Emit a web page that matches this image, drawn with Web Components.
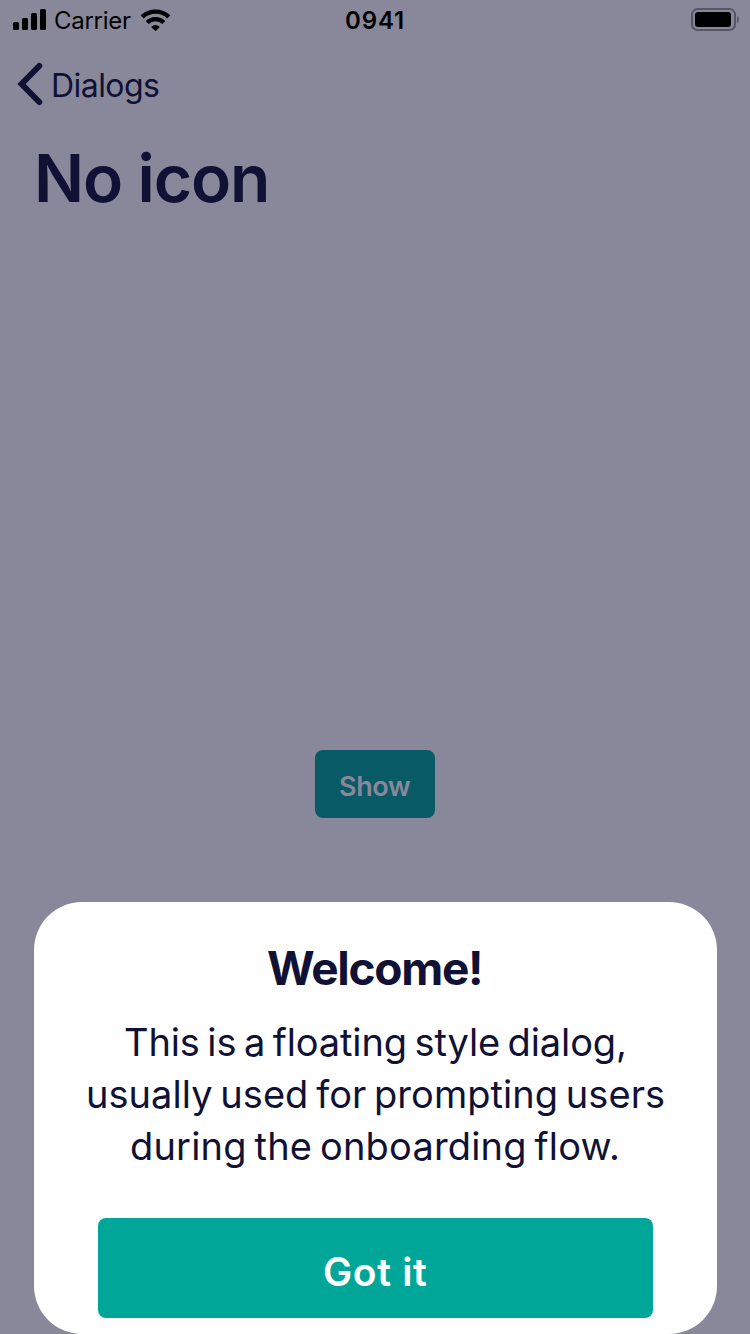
<!DOCTYPE html>
<html lang="en">
<head>
<meta charset="utf-8">
<title>No icon</title>
<style>
html,body{margin:0;height:100%}
body{font-family:Inter,"Liberation Sans",sans-serif;color:#111135;overflow:hidden}
</style>
</head>
<body>
<dialog-screen></dialog-screen>
<script>
// A single line of text whose drawn glyphs span exactly `span` pixels.
class TextLine extends HTMLElement {
  connectedCallback() {
    const root = this.attachShadow({mode: 'open'});
    root.innerHTML = `<style>:host{display:block;white-space:pre;flex:none;font-kerning:normal}
      span{display:inline-block}</style><span><slot></slot></span>`;
    const text = this.textContent, span = +this.getAttribute('span');
    const size = +this.getAttribute('size'), weight = this.getAttribute('weight') || 400;
    const ctx = document.createElement('canvas').getContext('2d');
    ctx.font = `${weight} ${size}px Inter, "Liberation Sans", sans-serif`;
    const m = ctx.measureText(text);
    const gap = +(this.getAttribute('gap') || 0);
    const ink = m.actualBoundingBoxLeft + m.actualBoundingBoxRight + gap * (text.split(' ').length - 1);
    this.style.font = ctx.font;
    this.style.lineHeight = (this.getAttribute('line') || size) + 'px';
    this.style.width = span + 'px';
    this.style.marginLeft = (this.getAttribute('indent') || 0) + 'px';
    const label = root.querySelector('span');
    label.style.letterSpacing = (span - ink) / (text.length - 1) + 'px';
    label.style.wordSpacing = gap + 'px';
    label.style.marginLeft = m.actualBoundingBoxLeft + 'px';
  }
}
customElements.define('text-line', TextLine);

class StatusBar extends HTMLElement {
  constructor() {
    super();
    this.attachShadow({mode: 'open'}).innerHTML = `
    <style>:host{display:grid;grid-template-columns:346px 345px 1fr;height:40px;color:#000}
    .left{display:flex}svg{display:block;flex:none}</style>
    <div class="left">
      <svg width="55" height="40"><rect x="13" y="22" width="6" height="8" rx="1.5"/><rect x="22" y="18" width="6" height="12" rx="1.5"/><rect x="31" y="13" width="6" height="17" rx="1.5"/><rect x="40" y="9" width="6" height="21" rx="1.5"/></svg>
      <text-line size="24" line="42" span="76">Carrier</text-line>
      <svg width="50" height="40" fill="none" stroke="#000"><path d="M11.2 16.9A19.5 19.5 0 0 1 37.8 16.9" stroke-width="4.4"/><path d="M16.2 22.6A11.7 11.7 0 0 1 32.8 22.6" stroke-width="4.2"/><path d="M20.2 26.9Q24.5 23 28.8 26.9L24.5 31.2Z" fill="#000" stroke="none"/></svg>
    </div>
    <text-line size="24" line="42" weight="600" span="57">0941</text-line>
    <svg width="59" height="40"><rect x="1" y="9" width="43" height="21" rx="5.5" fill="none" stroke="#575665" stroke-width="2"/><rect x="4" y="12" width="36" height="15" rx="3"/><path d="M46 16Q48 17 48 19.5T46 23Z" fill="#575665"/></svg>`;
  }
}
customElements.define('status-bar', StatusBar);

class NavBar extends HTMLElement {
  constructor() {
    super();
    this.attachShadow({mode: 'open'}).innerHTML = `
    <style>:host{display:flex;height:88px}svg{display:block;flex:none}</style>
    <svg width="52" height="88" fill="none" stroke="#111135" stroke-width="6" stroke-linecap="round" stroke-linejoin="miter"><path d="M39.2 26L21.6 44L39.2 62"/></svg>
    <slot></slot>`;
  }
}
customElements.define('nav-bar', NavBar);

class AppButton extends HTMLElement {
  constructor() {
    super();
    this.attachShadow({mode: 'open'}).innerHTML = `
    <style>:host{display:block;box-sizing:border-box;border-radius:8px;background:var(--fill);color:var(--ink)}</style><slot></slot>`;
  }
}
customElements.define('app-button', AppButton);

class FloatingDialog extends HTMLElement {
  constructor() {
    super();
    this.attachShadow({mode: 'open'}).innerHTML = `
    <style>:host{display:flex;flex-direction:column;box-sizing:border-box;width:683px;height:432px;margin-left:34px;padding-top:40px;border-radius:48px;background:#fff}
    .body{margin-top:22px;height:156px}
    ::slotted(app-button){width:555px;height:100px;margin:46px 0 0 64px}</style>
    <slot name="title"></slot><div class="body"><slot></slot></div><slot name="action"></slot>`;
  }
}
customElements.define('floating-dialog', FloatingDialog);

class DialogScreen extends HTMLElement {
  constructor() {
    super();
    this.attachShadow({mode: 'open'}).innerHTML = `
    <style>:host{display:flex;flex-direction:column;width:750px;height:1334px;background:#88889a}
    .title{height:622px;padding-top:0}
    .show{--fill:#085b66;--ink:#88889a;width:120px;height:68px;margin:0 0 84px 315px}
    .got{--fill:#00a698;--ink:#fff}</style>
    <status-bar></status-bar>
    <nav-bar><text-line size="32" line="91" span="106" indent="1">Dialogs</text-line></nav-bar>
    <div class="title"><text-line size="66" line="100" weight="600" span="228" indent="38">No icon</text-line></div>
    <app-button class="show"><text-line size="27" line="74" weight="600" span="71" indent="25">Show</text-line></app-button>
    <floating-dialog>
      <text-line slot="title" size="46" line="52" weight="700" span="212" indent="234">Welcome!</text-line>
      <text-line size="38" line="52" span="499" indent="91" gap="-3">This is a floating style dialog,</text-line>
      <text-line size="38" line="52" span="576" indent="54" gap="-3">usually used for prompting users</text-line>
      <text-line size="38" line="52" span="486" indent="97" gap="-3">during the onboarding flow.</text-line>
      <app-button slot="action" class="got"><text-line size="39" line="107" weight="600" span="103" indent="226">Got it</text-line></app-button>
    </floating-dialog>`;
  }
}
customElements.define('dialog-screen', DialogScreen);
</script>
</body>
</html>
